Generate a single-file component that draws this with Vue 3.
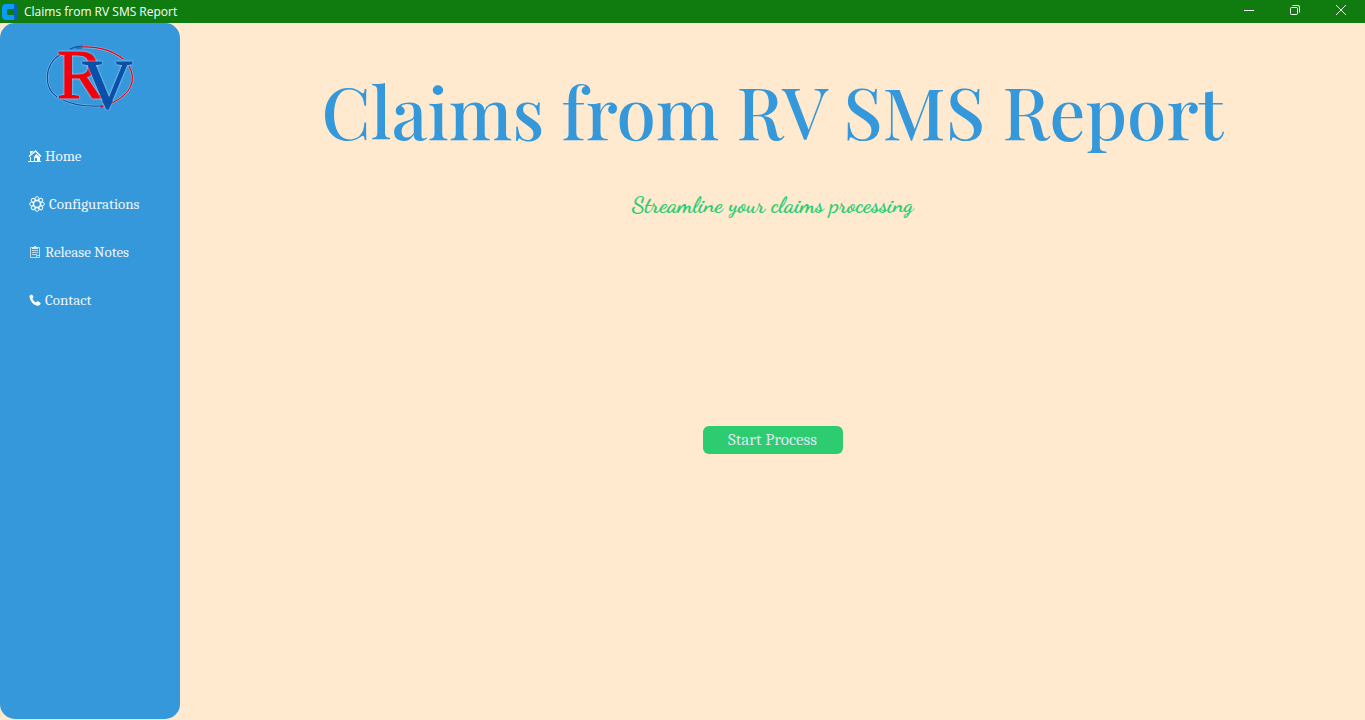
<script setup>
const title = 'Claims from RV SMS Report'
const items = [
  { id: 'home', label: 'Home' },
  { id: 'config', label: 'Configurations' },
  { id: 'notes', label: 'Release Notes' },
  { id: 'contact', label: 'Contact' },
]
</script>

<template>
  <div class="window">
    <header class="titlebar">
      <svg class="app-icon" width="16" height="16" viewBox="0 0 16 16" aria-hidden="true">
        <path d="M12 0h1a3 3 0 0 1 3 3v10a3 3 0 0 1-3 3h-1z" fill="#0563b8" />
        <path d="M4 0h8v5H7Q5 5 5 7v2q0 2 2 2h5v5H4a4 4 0 0 1-4-4V4a4 4 0 0 1 4-4z" fill="#0a9bfa" />
        <path d="M7 5h5v6H7Q5 11 5 9V7q0-2 2-2z" fill="#107c10" />
      </svg>
      <span class="caption">{{ title }}</span>
      <div class="controls">
        <button type="button" aria-label="Minimize">
          <svg width="12" height="12" viewBox="0 0 12 12"><path d="M1 6.5h10" /></svg>
        </button>
        <button type="button" aria-label="Restore">
          <svg width="12" height="12" viewBox="0 0 12 12">
            <rect x="1.5" y="3.5" width="7" height="7" rx="1" />
            <path d="M3.500 1.500H9q1.500 0 1.500 1.500v5.500" />
          </svg>
        </button>
        <button type="button" aria-label="Close">
          <svg width="12" height="12" viewBox="0 0 12 12"><path d="M1 1l10 10M11 1L1 11" /></svg>
        </button>
      </div>
    </header>

    <div class="body">
      <aside class="sidebar">
        <svg class="logo" width="88" height="68" viewBox="1 0 88 68" role="img" aria-label="RV">
          <g fill="none" stroke="#c9dff2" stroke-opacity="0.500" stroke-width="2.400">
            <path d="M16 9C-2 20-1 43 12 52M18 55Q32 62 56 61" />
            <path d="M36 2Q62 1 78 14M84 21C92 35 86 49 67 58" />
          </g>
          <g fill="none" stroke-width="1.200">
            <path d="M16 9C-2 20-1 43 12 52M18 55Q32 62 56 61" stroke="#0a4fa8" />
            <path d="M25 4Q31 1 38 1M31 3h6" stroke="#0a4fa8" />
            <path d="M36 2Q62 1 78 14M84 21C92 35 86 49 67 58" stroke="#f4000c" />
          </g>
          <text class="mark red" x="12" y="53">R</text>
          <text class="mark blue" x="37" y="63">V</text>
          <path d="M57 56h11l-5 9z" fill="#0a4fa8" />
          <path d="M55 60l4 1-3 2z" fill="#f4000c" />
        </svg>

        <nav class="menu">
          <button v-for="item in items" :key="item.id" type="button" class="item">
            <svg v-if="item.id === 'home'" width="14" height="14" viewBox="0 0 14 14" aria-hidden="true">
              <path d="M1 7.500L7.500 2 13 7.500" fill="none" stroke="#fff" stroke-width="1.500" />
              <path d="M2 2h3v1L2 5.500z" fill="#f5fafd" />
              <path d="M2 8h1v4H2zM6 8l2-3 4 3v4H9V9H7v3H6zM9 9h1v2H9zM0 12h13v1H0z" fill="#f5fafd" />
            </svg>
            <svg v-else-if="item.id === 'config'" width="18" height="16" viewBox="0 0 18 16" aria-hidden="true">
              <g fill="none" stroke="#f5fafd">
                <circle cx="9" cy="8" r="3.500" stroke-width="1.400" />
                <circle v-for="n in 8" :key="n" cx="9" cy="2.600" r="1.900" :transform="`rotate(${n * 45} 9 8)`" />
              </g>
            </svg>
            <svg v-else-if="item.id === 'notes'" width="14" height="14" viewBox="0 0 14 14" aria-hidden="true">
              <g fill="none" stroke="#e4f1fa" stroke-opacity="0.750">
                <path d="M4 2.500H2.500v10h9v-10H10" />
                <path d="M4 5.500h6M4 7.500h6M4 9.500h5" />
                <path d="M8.500 12v-1.500h3" />
              </g>
              <path d="M4 2h2V1h2v1h2v2H4z" fill="#f5fafd" fill-opacity="0.850" />
            </svg>
            <svg v-else width="14" height="14" viewBox="0 0 14 14" aria-hidden="true">
              <path d="M1.500 4Q1 2.500 2.500 2l1-.5q1 0 1.500 1.500l.5 1.500-1.200 1.200Q5.500 8 8 9.500l1-1q.7-.5 1.500 0l1.500 1q1 .7.500 1.500-1 1.800-3 1.700Q3 11.500 1.500 4z" fill="#fff" />
            </svg>
            <span>{{ item.label }}</span>
          </button>
        </nav>
      </aside>

      <main class="content">
        <h1>{{ title }}</h1>
        <p>Streamline your claims processing</p>
        <button type="button" class="start">Start Process</button>
      </main>
    </div>
  </div>
</template>

<style>
body {
  background: #ffe9cf;
}
</style>

<style scoped>
.window {
  display: flex;
  flex-direction: column;
  min-height: 100vh;
  background: #ffe9cf;
}

button {
  border: 0;
  padding: 0;
  background: none;
  cursor: pointer;
}

.titlebar {
  display: flex;
  align-items: center;
  height: 23px;
  padding-left: 2px;
  background: #107c10;
  color: #fff;
}

.caption {
  margin-left: 6px;
  font: 12px/16px "Segoe UI", "Open Sans", "Noto Sans", sans-serif;
}

.controls {
  display: flex;
  align-self: flex-start;
  margin-left: auto;
  padding-right: 1px;
}

.controls button {
  display: flex;
  align-items: center;
  justify-content: center;
  width: 46px;
  height: 20px;
}

.controls path,
.controls rect {
  fill: none;
  stroke: #fff;
}

.body {
  display: flex;
  flex: 1;
}

.sidebar {
  display: flex;
  flex-direction: column;
  width: 180px;
  margin-bottom: 1px;
  border-radius: 15px;
  background: #3498db;
}

.logo {
  margin: 22px auto 0;
  overflow: visible;
}

.mark {
  font-family: "Liberation Serif", serif;
  font-size: 70px;
  stroke-width: 1px;
  filter: drop-shadow(0 0 1px #c9dff2);
}

.red {
  fill: #f4000c;
  stroke: #f4000c;
}

.blue {
  fill: #0a4fa8;
  stroke: #0a4fa8;
}

.menu {
  display: flex;
  flex-direction: column;
  gap: 20px;
  margin-top: 29px;
  padding: 0 28px;
}

.item {
  display: flex;
  align-items: center;
  gap: 3px;
  height: 28px;
  color: #f0f6fa;
  font: 15px/18px Cambria, "DejaVu Serif Condensed", "DejaVu Serif", serif;
  white-space: nowrap;
}

.content {
  display: flex;
  flex: 1;
  flex-direction: column;
  align-items: center;
}

h1 {
  margin: 42px 0 0;
  color: #3498db;
  font: 500 71px/92px "Playfair Display", "Liberation Serif", serif;
}

p {
  margin: 34px 0 0;
  color: #2ecc71;
  font: bold 23px/28px "Dancing Script", "Liberation Serif", serif;
}

.start {
  width: 140px;
  height: 28px;
  margin-top: 207px;
  border-radius: 6px;
  background: #2ecc71;
  color: #dce4ee;
  font: 17px/20px Cambria, "DejaVu Serif", serif;
}
</style>
